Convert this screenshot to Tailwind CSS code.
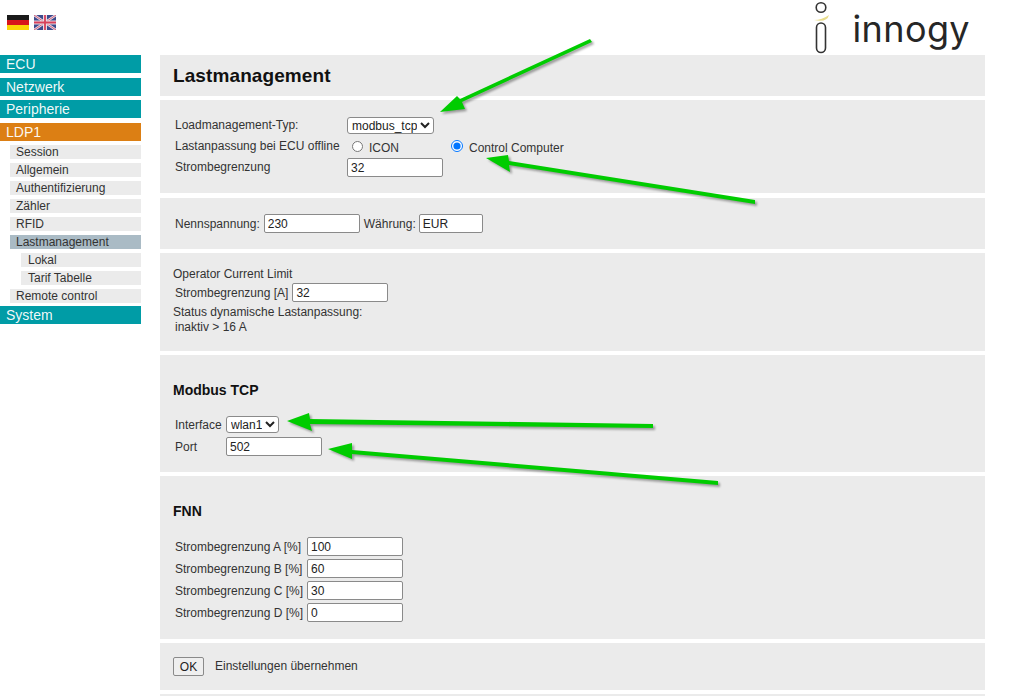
<!DOCTYPE html>
<html lang="de">
<head>
  <meta charset="UTF-8" />
  <title>Lastmanagement</title>
  <script src="https://cdn.jsdelivr.net/npm/@tailwindcss/browser@4"></script>
</head>
<body class="bg-white h-[696px] overflow-hidden relative font-['Liberation_Sans',Arial,sans-serif] text-[12px] text-[#333]">
  <!-- Header -->
  <header class="h-[55px] flex justify-between">
    <div class="flex gap-[5px] pl-[7px] pt-[15px]">
      <svg width="22" height="15" viewBox="0 0 22 15"><rect width="22" height="5" fill="#1a1a1a"/><rect y="5" width="22" height="5" fill="#d8141b"/><rect y="10" width="22" height="5" fill="#fbd406"/></svg>
      <svg width="22" height="15" viewBox="0 0 22 15"><rect width="22" height="15" fill="#3d4a8c"/><path d="M0 0L22 15M22 0L0 15" stroke="#e8dce6" stroke-width="2.5"/><path d="M0 0L22 15M22 0L0 15" stroke="#d4607a" stroke-width="1"/><path d="M11 0V15M0 7.5H22" stroke="#e8dce6" stroke-width="4"/><path d="M11 0V15M0 7.5H22" stroke="#d8405a" stroke-width="1.8"/></svg>
    </div>
    <div class="flex items-start pr-[54px]">
      <svg width="20" height="54" viewBox="0 0 20 54" class="mr-[23px]">
        <circle cx="12" cy="7.5" r="4.8" fill="none" stroke="#333" stroke-width="1.6"/>
        <path d="M5 20Q13 20 20 15Q18 23 5 20Z" fill="#e8dc8a"/>
        <rect x="7.5" y="23" width="9" height="29.5" rx="4.5" fill="none" stroke="#333" stroke-width="1.6"/>
      </svg>
      <span class="font-['Inter',sans-serif] text-[36px] leading-[38px] text-[#262626] mt-[10px] tracking-[0.4px]">innogy</span>
    </div>
  </header>

  <div class="flex gap-[19px]">
    <!-- Sidebar -->
    <nav class="w-[141px] shrink-0 flex flex-col text-[14px] leading-[18px]">
      <a class="h-[18px] bg-[#009ca6] text-white/95 pl-[6px] mb-[5px]">ECU</a>
      <a class="h-[18px] bg-[#009ca6] text-white/95 pl-[6px] mb-[4px]">Netzwerk</a>
      <a class="h-[18px] bg-[#009ca6] text-white/95 pl-[6px] mb-[5px]">Peripherie</a>
      <a class="h-[18px] bg-[#dc7f14] text-white/95 pl-[6px] mb-[4px]">LDP1</a>
      <div class="flex flex-col gap-[4px] mb-[3px] text-[12px] leading-[14px] text-[#333]">
        <a class="h-[14px] ml-[10px] pl-[6px] bg-[#ebebeb]">Session</a>
        <a class="h-[14px] ml-[10px] pl-[6px] bg-[#ebebeb]">Allgemein</a>
        <a class="h-[14px] ml-[10px] pl-[6px] bg-[#ebebeb]">Authentifizierung</a>
        <a class="h-[14px] ml-[10px] pl-[6px] bg-[#ebebeb]">Zähler</a>
        <a class="h-[14px] ml-[10px] pl-[6px] bg-[#ebebeb]">RFID</a>
        <a class="h-[14px] ml-[10px] pl-[6px] bg-[#aabbc5]">Lastmanagement</a>
        <a class="h-[14px] ml-[21px] pl-[7px] bg-[#ebebeb]">Lokal</a>
        <a class="h-[14px] ml-[21px] pl-[7px] bg-[#ebebeb]">Tarif Tabelle</a>
        <a class="h-[14px] ml-[10px] pl-[6px] bg-[#ebebeb]">Remote control</a>
      </div>
      <a class="h-[18px] bg-[#009ca6] text-white/95 pl-[6px]">System</a>
    </nav>

    <!-- Main panels -->
    <main class="w-[825px] flex flex-col">
      <section class="h-[41px] bg-[#ebebeb] mb-[4px] pl-[13px] pt-[10px]">
        <h1 class="text-[19px] leading-[22px] font-bold text-[#111] tracking-[0.1px]">Lastmanagement</h1>
      </section>

      <section class="h-[93px] bg-[#ebebeb] mb-[5px] pl-[15px] pt-[17px]">
        <div class="flex items-center h-[16px]">
          <label class="w-[172px]">Loadmanagement-Typ:</label>
          <select class="h-[17px] w-[87px] bg-white border border-[#8a8a8a] rounded-[3px] text-[12px] pl-0 text-[#222]"><option>modbus_tcp</option></select>
        </div>
        <div class="flex items-center h-[14px] mt-[6px]">
          <label class="w-[177px]">Lastanpassung bei ECU offline</label>
          <input type="radio" name="offline" class="m-0 size-[11px]" />
          <span class="ml-[6px] w-[82px] mt-[4px]">ICON</span>
          <input type="radio" name="offline" checked class="m-0 size-[12px]" />
          <span class="ml-[6px] mt-[4px]">Control Computer</span>
        </div>
        <div class="flex items-center h-[19px] mt-[5px]">
          <label class="w-[172px] pb-[1px]">Strombegrenzung</label>
          <input value="32" class="h-[19px] w-[96px] bg-white border border-[#8a8a8a] rounded-[2px] px-[3px] text-[12px] text-[#222]" />
        </div>
      </section>

      <section class="h-[51px] bg-[#ebebeb] mb-[4px] pl-[15px] pt-[16px]">
        <div class="flex items-center h-[19px]">
          <label class="mr-[4px]">Nennspannung:</label>
          <input value="230" class="h-[19px] w-[96px] bg-white border border-[#8a8a8a] rounded-[2px] px-[3px] text-[12px] text-[#222]" />
          <label class="ml-[4px] mr-[3px]">Währung:</label>
          <input value="EUR" class="h-[19px] w-[64px] bg-white border border-[#8a8a8a] rounded-[2px] px-[3px] text-[12px] text-[#222]" />
        </div>
      </section>

      <section class="h-[98px] bg-[#ebebeb] mb-[4px] pl-[13px] pt-[14px] leading-[14px]">
        <p>Operator Current Limit</p>
        <div class="flex items-center h-[19px] pl-[2px] mt-[2px]">
          <label class="mr-[4px]">Strombegrenzung [A]</label>
          <input value="32" class="h-[19px] w-[96px] bg-white border border-[#8a8a8a] rounded-[2px] px-[3px] text-[12px] text-[#222]" />
        </div>
        <p class="mt-[3px]">Status dynamische Lastanpassung:</p>
        <p class="pl-[2px] mt-[1px]">inaktiv &gt; 16 A</p>
      </section>

      <section class="h-[117px] bg-[#ebebeb] mb-[4px] pl-[13px] pt-[27px]">
        <h2 class="text-[14px] leading-[17px] font-bold text-[#111]">Modbus TCP</h2>
        <div class="flex items-center h-[17px] pl-[2px] mt-[17px]">
          <label class="w-[51px]">Interface</label>
          <select class="h-[17px] w-[53px] bg-white border border-[#8a8a8a] rounded-[3px] text-[12px] pl-0 text-[#222]"><option>wlan1</option></select>
        </div>
        <div class="flex items-center h-[19px] pl-[2px] mt-[4px]">
          <label class="w-[51px]">Port</label>
          <input value="502" class="h-[19px] w-[96px] bg-white border border-[#8a8a8a] rounded-[2px] px-[3px] text-[12px] text-[#222]" />
        </div>
      </section>

      <section class="h-[163px] bg-[#ebebeb] mb-[4px] pl-[13px] pt-[27px]">
        <h2 class="text-[14px] leading-[17px] font-bold text-[#111]">FNN</h2>
        <div class="flex flex-col gap-[3px] pl-[2px] mt-[17px]">
          <div class="flex items-center h-[19px]">
            <label class="w-[132px]">Strombegrenzung A [%]</label>
            <input value="100" class="h-[19px] w-[96px] bg-white border border-[#8a8a8a] rounded-[2px] px-[3px] text-[12px] text-[#222]" />
          </div>
          <div class="flex items-center h-[19px]">
            <label class="w-[132px]">Strombegrenzung B [%]</label>
            <input value="60" class="h-[19px] w-[96px] bg-white border border-[#8a8a8a] rounded-[2px] px-[3px] text-[12px] text-[#222]" />
          </div>
          <div class="flex items-center h-[19px]">
            <label class="w-[132px]">Strombegrenzung C [%]</label>
            <input value="30" class="h-[19px] w-[96px] bg-white border border-[#8a8a8a] rounded-[2px] px-[3px] text-[12px] text-[#222]" />
          </div>
          <div class="flex items-center h-[19px]">
            <label class="w-[132px]">Strombegrenzung D [%]</label>
            <input value="0" class="h-[19px] w-[96px] bg-white border border-[#8a8a8a] rounded-[2px] px-[3px] text-[12px] text-[#222]" />
          </div>
        </div>
      </section>

      <section class="h-[47px] bg-[#ebebeb] mb-[4px] pl-[13px] pt-[14px] flex items-start">
        <button class="h-[19px] w-[31px] bg-[#efefef] border border-[#8a8a8a] rounded-[2px] text-[12px] leading-[16px] text-[#222]">OK</button>
        <span class="ml-[11px] mt-0">Einstellungen übernehmen</span>
      </section>

      <section class="h-[20px] bg-[#ebebeb]"></section>
    </main>
  </div>

  <!-- Annotation arrows drawn over the page -->
  <svg class="absolute inset-0 pointer-events-none drop-shadow-[2px_2px_1px_rgba(0,0,0,0.35)]" width="1024" height="696" viewBox="0 0 1024 696">
    <g fill="#00cc00">
      <polygon points="590,39 592,42 462,102 465,109 440,112 457,96 460,99"/>
      <polygon points="755,200 755,204 509,165 510,172 486,158 508,155 509,161"/>
      <polygon points="653,424 653,428 310,424 312,431 287,421 309,413 310,419"/>
      <polygon points="718,481 718,485 352,454 352,459 328,449 352,443 352,450"/>
    </g>
  </svg>
</body>
</html>
